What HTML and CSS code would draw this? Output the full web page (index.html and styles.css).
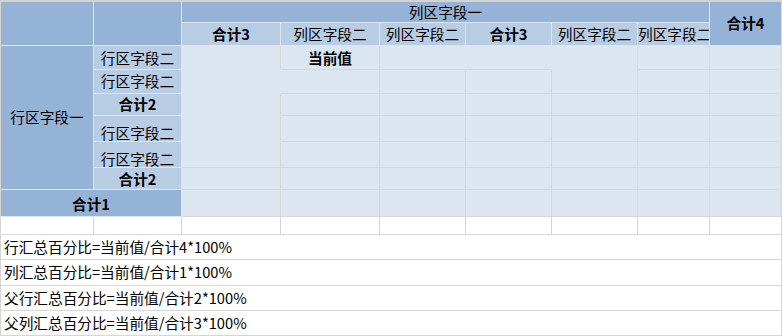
FILE: index.html
```html
<!DOCTYPE html>
<html lang="zh-CN">
<head>
<meta charset="utf-8">
<title>交叉表</title>
<link rel="stylesheet" href="styles.css">
</head>
<body>
<div class="sheet">
  <div class="h dark hA"></div>
  <div class="h dark hB"></div>
  <div class="h dark top">列区字段一</div>
  <div class="h dark t4 b">合计4</div>

  <div class="h light b">合计3</div>
  <div class="h light">列区字段二</div>
  <div class="h light">列区字段二</div>
  <div class="h light b">合计3</div>
  <div class="h light">列区字段二</div>
  <div class="h light clip">列区字段二</div>

  <div class="h dark rA">行区字段一</div>

  <div class="h light dn">行区字段二</div>
  <div class="d hb"></div><div class="d b dn">当前值</div><div class="d hr"></div><div class="d hr"></div><div class="d hb"></div><div class="d"></div><div class="d"></div>

  <div class="h light">行区字段二</div>
  <div class="d hb hr"></div><div class="d"></div><div class="d"></div><div class="d"></div><div class="d"></div><div class="d"></div><div class="d"></div>

  <div class="h light b">合计2</div>
  <div class="d hb"></div><div class="d"></div><div class="d"></div><div class="d"></div><div class="d"></div><div class="d"></div><div class="d"></div>

  <div class="h light bot">行区字段二</div>
  <div class="d hb"></div><div class="d"></div><div class="d"></div><div class="d"></div><div class="d"></div><div class="d"></div><div class="d"></div>

  <div class="h light bot">行区字段二</div>
  <div class="d"></div><div class="d"></div><div class="d"></div><div class="d"></div><div class="d"></div><div class="d"></div><div class="d"></div>

  <div class="h light b dn">合计2</div>
  <div class="d"></div><div class="d"></div><div class="d"></div><div class="d"></div><div class="d"></div><div class="d"></div><div class="d"></div>

  <div class="h dark b t1 dn">合计1</div>
  <div class="d"></div><div class="d"></div><div class="d"></div><div class="d"></div><div class="d"></div><div class="d"></div><div class="d"></div>

  <div class="w"></div><div class="w"></div><div class="w"></div><div class="w"></div><div class="w"></div><div class="w"></div><div class="w"></div><div class="w"></div><div class="w"></div>

  <div class="note">行汇总百分比=当前值/合计4*100%</div>
  <div class="note">列汇总百分比=当前值/合计1*100%</div>
  <div class="note">父行汇总百分比=当前值/合计2*100%</div>
  <div class="note">父列汇总百分比=当前值/合计3*100%</div>
</div>
</body>
</html>
```

FILE: styles.css
```css
html, body {
  margin: 0;
  padding: 0;
  background: #ffffff;
}

body {
  font-family: "Noto Sans CJK SC", "Noto Sans", sans-serif;
  font-size: 14.67px;
  color: #000000;
  line-height: 1;
}

.sheet {
  width: 782px;
  box-sizing: border-box;
  border-top: 2px solid #d4d4d4;
  border-left: 1px solid #d6d6d6;
  display: grid;
  grid-template-columns: 93px 88px 99px 99px 86px 86px 86px 72px 72px;
  grid-template-rows: 21px 23px 24px 24px 22px 26px 26px 22px 27px 18px 25px 26px 25px 25px;
}

.sheet > div {
  box-sizing: border-box;
  border-right: 1px solid #d6d6d6;
  border-bottom: 1px solid #d6d6d6;
  display: flex;
  align-items: center;
  justify-content: center;
  white-space: nowrap;
  overflow: hidden;
  min-width: 0;
}

.h {
  border-right-color: #dce6f1 !important;
  border-bottom-color: #dce6f1 !important;
}

.dark { background: #95b3d7; }
.light { background: #b8cce4; }

.hA { grid-column: 1; grid-row: 1 / 3; }
.hB { grid-column: 2; grid-row: 1 / 3; }
.top { grid-column: 3 / 9; grid-row: 1; padding-top: 1px; }
.t4 { grid-column: 9; grid-row: 1 / 3; border-right-color: #d6d6d6 !important; }
.rA { grid-column: 1; grid-row: 3 / 9; }
.t1 { grid-column: 1 / 3; }

.b { font-weight: bold; }
.dn { padding-top: 2px; }
.bot { align-items: flex-end !important; padding-bottom: 0px; }
.clip { justify-content: flex-start !important; }

.d { background: #dce6f1; }
.d.hb { border-bottom-color: #dce6f1; }
.d.hr { border-right-color: #dce6f1; }

.w { background: #ffffff; }

.note {
  grid-column: 1 / -1;
  background: #ffffff;
  justify-content: flex-start !important;
  padding-left: 3px;
}
```
